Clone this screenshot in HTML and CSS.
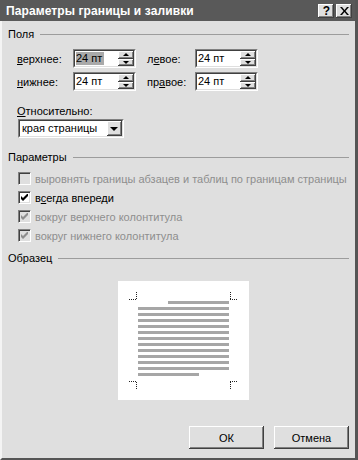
FILE: index.html
```html
<!DOCTYPE html>
<html lang="ru">
<head>
<meta charset="utf-8">
<title>Параметры границы и заливки</title>
<link rel="stylesheet" href="styles.css">
</head>
<body>
<div class="window">
  <div class="titlebar">
    <span class="title">Параметры границы и заливки</span>
    <div class="tbtns">
      <span class="tbtn q">?</span>
      <span class="tbtn"><svg width="9" height="8" viewBox="0 0 9 8"><path d="M0 0h2l2.5 3 2.5-3h2L5.5 4 9 8H7L4.5 5 2 8H0l3.5-4z" fill="#000"/></svg></span>
    </div>
  </div>
  <div class="content">
    <div class="group"><span>Поля</span><i class="rule"></i></div>
    <div class="fields">
      <span class="lbl"><u>в</u>ерхнее:</span>
      <div class="spin"><div class="inner"><span class="val"><span class="sel">24 пт</span></span><span class="arrows"><b class="up"><i></i></b><b class="dn"><i></i></b></span></div></div>
      <span class="lbl">л<u>е</u>вое:</span>
      <div class="spin"><div class="inner"><span class="val">24 пт</span><span class="arrows"><b class="up"><i></i></b><b class="dn"><i></i></b></span></div></div>
      <span class="lbl"><u>н</u>ижнее:</span>
      <div class="spin"><div class="inner"><span class="val">24 пт</span><span class="arrows"><b class="up"><i></i></b><b class="dn"><i></i></b></span></div></div>
      <span class="lbl">пр<u>а</u>вое:</span>
      <div class="spin"><div class="inner"><span class="val">24 пт</span><span class="arrows"><b class="up"><i></i></b><b class="dn"><i></i></b></span></div></div>
    </div>
    <div class="rel-label"><u>О</u>тносительно:</div>
    <div class="select"><div class="inner"><span class="val">края страницы</span><b class="drop"><i></i></b></div></div>

    <div class="group g2"><span>Параметры</span><i class="rule"></i></div>
    <div class="checks">
      <div class="chk disabled"><span class="box"></span><span>выровнять границы абзацев и таблиц по границам страницы</span></div>
      <div class="chk"><span class="box on"><svg width="7" height="7" viewBox="0 0 7 7"><path d="M0 2v3l2 2 5-5V-1L2 4z" fill="#000"/></svg></span><span>в<u>с</u>егда впереди</span></div>
      <div class="chk disabled"><span class="box"><svg width="7" height="7" viewBox="0 0 7 7"><path d="M0 2v3l2 2 5-5V-1L2 4z" fill="#8e8e8e"/></svg></span><span>вокруг верхнего колонтитула</span></div>
      <div class="chk disabled"><span class="box"><svg width="7" height="7" viewBox="0 0 7 7"><path d="M0 2v3l2 2 5-5V-1L2 4z" fill="#8e8e8e"/></svg></span><span>вокруг нижнего колонтитула</span></div>
    </div>

    <div class="group g3"><span>Образец</span><i class="rule"></i></div>
    <div class="preview">
      <svg width="131" height="119" viewBox="0 0 131 119">
        <rect width="131" height="119" fill="#fff"/>
        <g stroke="#222" stroke-width="1" stroke-dasharray="1 1" fill="none">
          <path d="M11 18.5H19M18.5 11V18"/>
          <path d="M112 18.5H120M112.5 11V18"/>
          <path d="M11 100.5H19M18.5 101V108"/>
          <path d="M112 100.5H120M112.5 101V108"/>
        </g>
        <g fill="#a6a6a6">
          <rect x="50" y="20" width="61" height="3"/>
          <rect x="20" y="26" width="91" height="3"/>
          <rect x="20" y="32" width="91" height="3"/>
          <rect x="20" y="38" width="91" height="3"/>
          <rect x="20" y="44" width="91" height="3"/>
          <rect x="20" y="50" width="91" height="3"/>
          <rect x="20" y="56" width="91" height="3"/>
          <rect x="20" y="62" width="91" height="3"/>
          <rect x="20" y="68" width="91" height="3"/>
          <rect x="20" y="74" width="91" height="3"/>
          <rect x="20" y="80" width="91" height="3"/>
          <rect x="20" y="86" width="91" height="3"/>
          <rect x="20" y="92" width="61" height="3"/>
        </g>
      </svg>
    </div>

    <div class="buttons">
      <button class="btn">ОК</button>
      <button class="btn">Отмена</button>
    </div>
  </div>
</div>
</body>
</html>
```

FILE: styles.css
```css
html, body {
  margin: 0;
  padding: 0;
  background: #dfdfdf;
}
body {
  width: 358px;
  height: 460px;
  overflow: hidden;
  font-family: "Liberation Sans", Arial, sans-serif;
  font-size: 11px;
  color: #000;
}
u { text-decoration: underline; text-underline-offset: 1px; }

.window {
  width: 358px;
  height: 460px;
  box-sizing: border-box;
  border-left: 2px solid #f4f4f4;
  border-right: 3px solid #555;
  border-bottom: 2px solid #555;
  display: flex;
  flex-direction: column;
  background: #dfdfdf;
}

.titlebar {
  height: 21px;
  margin-left: -2px;
  background: #595959;
  display: flex;
  align-items: center;
  padding: 0 3px 0 6px;
}
.title {
  flex: 1;
  color: #fff;
  font-weight: bold;
  font-size: 12px;
  letter-spacing: 0.1px;
}
.tbtns { display: flex; gap: 2px; }
.tbtn {
  width: 16px;
  height: 14px;
  box-sizing: border-box;
  background: #dfdfdf;
  box-shadow: inset -1px -1px #404040, inset 1px 1px #fff, inset -2px -2px #808080;
  display: flex;
  align-items: center;
  justify-content: center;
}
.tbtn.q {
  font-weight: bold;
  font-size: 12px;
  line-height: 14px;
  padding-left: 1px;
}

.content {
  flex: 1;
  display: flex;
  flex-direction: column;
  padding: 0 6px 0 6px;
}

.group {
  display: flex;
  align-items: center;
  gap: 6px;
  height: 13px;
  margin-top: 6px;
}
.group .rule {
  flex: 1;
  height: 1px;
  background: #9c9c9c;
  margin-top: 1px;
}
.g2 { margin-top: 12px; }
.g3 { margin-top: 6px; }

.fields {
  display: grid;
  grid-template-columns: 56px 63px 48px 63px;
  column-gap: 0;
  row-gap: 4px;
  margin: 9px 0 0 9px;
  align-items: center;
}
.fields .lbl:nth-child(3), .fields .lbl:nth-child(7) { margin-left: 11px; }
.fields { grid-template-columns: 56px 63px 59px 63px; }

.spin, .select {
  height: 19px;
  box-sizing: border-box;
  border: 1px solid;
  border-color: #808080 #fff #fff #808080;
}
.inner {
  height: 100%;
  box-sizing: border-box;
  border: 1px solid;
  border-color: #404040 #dfdfdf #dfdfdf #404040;
  background: #fff;
  display: flex;
}
.val {
  flex: 1;
  line-height: 15px;
  padding-left: 1px;
  white-space: nowrap;
}
.sel {
  background: #a9a9a9;
  display: inline-block;
  line-height: 13px;
  padding-right: 2px;
}
.arrows {
  width: 16px;
  display: flex;
  flex-direction: column;
}
.arrows b, .drop {
  flex: 1;
  background: #dfdfdf;
  box-shadow: inset -1px -1px #404040, inset 1px 1px #fff, inset -2px -2px #808080;
  display: flex;
  align-items: center;
  justify-content: center;
}
.arrows b i {
  width: 0; height: 0;
  border-left: 3px solid transparent;
  border-right: 3px solid transparent;
  margin-right: 1px;
}
.arrows .up i { border-bottom: 3px solid #000; }
.arrows .dn i { border-top: 3px solid #000; }

.rel-label {
  margin: 14px 0 0 9px;
  line-height: 13px;
}
.select {
  width: 106px;
  margin: 1px 0 0 10px;
}
.select .val { padding-left: 2px; }
.drop {
  flex: 0 0 15px;
}
.drop i {
  width: 0; height: 0;
  border-left: 4px solid transparent;
  border-right: 4px solid transparent;
  border-top: 4px solid #000;
  margin: 1px 1px 0 0;
}

.checks {
  display: flex;
  flex-direction: column;
  margin: 6px 0 0 10px;
}
.chk {
  height: 19px;
  display: flex;
  align-items: center;
  gap: 4px;
  white-space: nowrap;
}
.chk.disabled { color: #8e8e8e; }
.box {
  width: 13px;
  height: 13px;
  box-sizing: border-box;
  border: 1px solid;
  border-color: #808080 #fff #fff #808080;
  box-shadow: inset 1px 1px #404040, inset -1px -1px #dfdfdf;
  background: #fff;
  display: flex;
  align-items: center;
  justify-content: center;
}
.chk.disabled .box { background: #dfdfdf; }

.preview {
  margin: 17px 0 0 110px;
  width: 131px;
  height: 119px;
}
.preview svg { display: block; }

.buttons {
  margin-top: auto;
  margin-bottom: 9px;
  display: flex;
  justify-content: flex-end;
  gap: 10px;
  padding-right: 0;
}
.btn {
  width: 75px;
  height: 23px;
  border: none;
  background: #dfdfdf;
  box-shadow: inset -1px -1px #404040, inset 1px 1px #fff, inset -2px -2px #808080;
  font-family: "Liberation Sans", Arial, sans-serif;
  font-size: 11px;
  color: #000;
  padding: 0;
}
```
